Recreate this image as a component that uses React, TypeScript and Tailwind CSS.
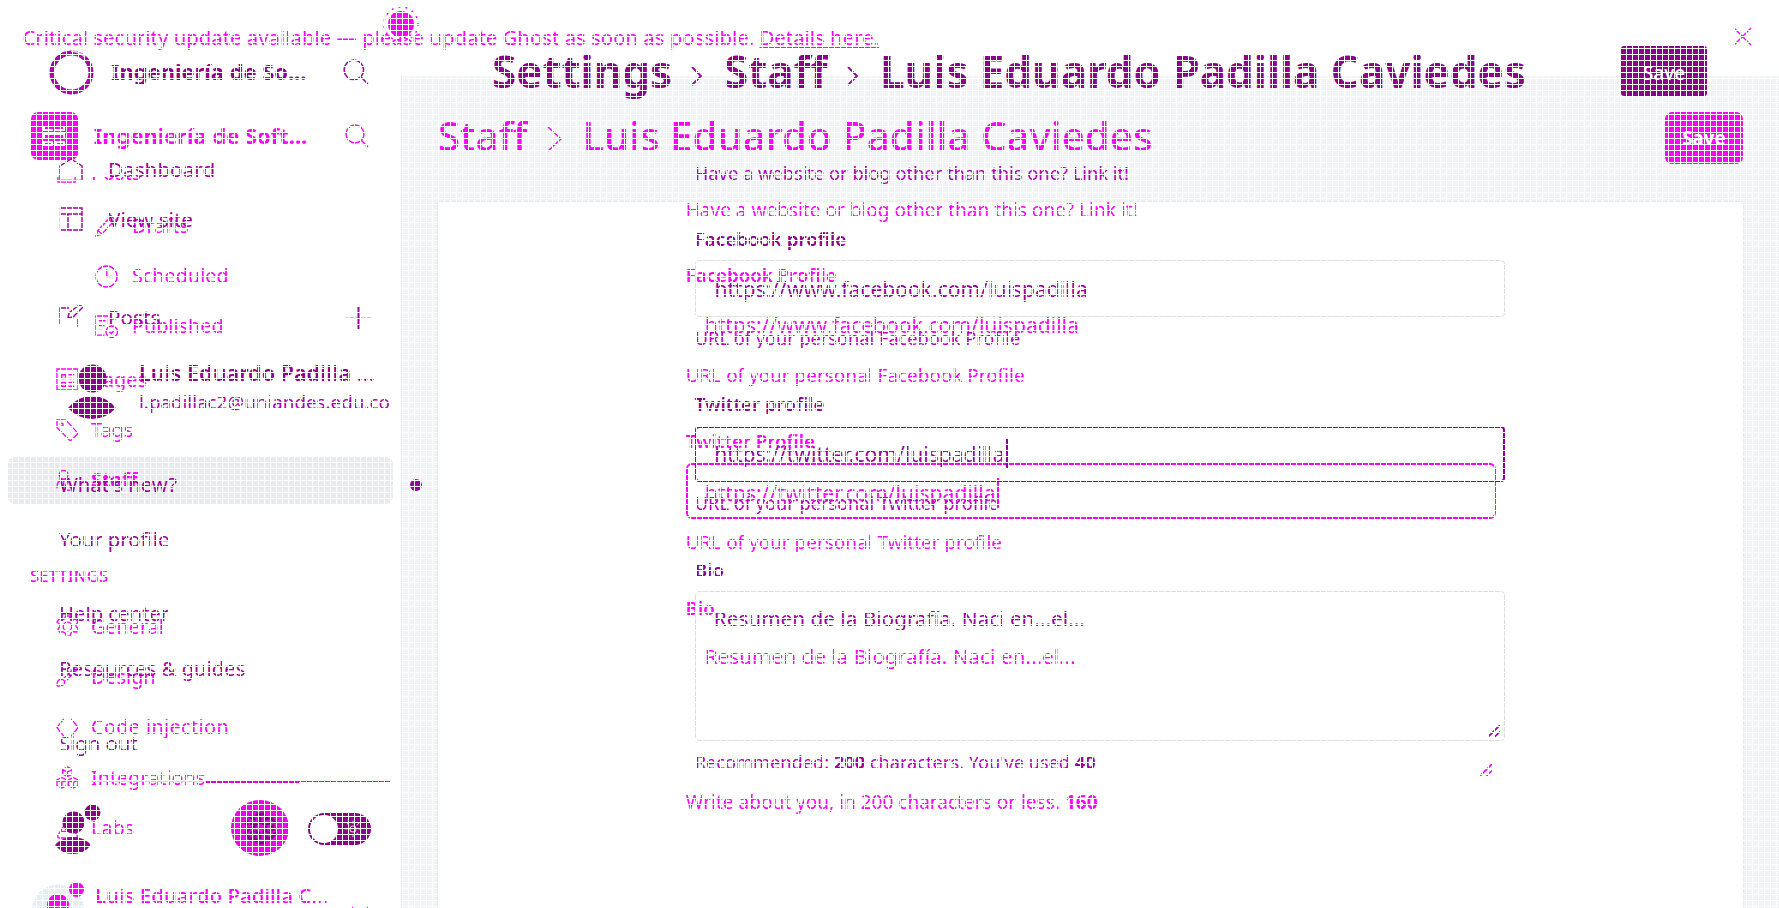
import type { ReactNode } from "react";

type Box = { children?: ReactNode; className?: string; size?: number; box?: string };

function Icon({ children, className = "", size = 23, box = "0 0 24 24" }: Box) {
  return (
    <svg
      width={size}
      height={size}
      viewBox={box}
      fill="none"
      stroke="currentColor"
      strokeWidth="1.4"
      className={"shrink-0 " + className}
    >
      {children}
    </svg>
  );
}

const Search = ({ size }: { size: number }) => (
  <Icon size={size}>
    <circle cx="10" cy="10" r="9" />
    <path d="M16.5 16.5L23 23" />
  </Icon>
);

const Cog = ({ className = "", size = 23 }: Box) => (
  <Icon size={size} className={className}>
    <circle cx="12" cy="12" r="4.5" />
    <path d="M10 1h4l1 3 3 1.2 2.700-1.200 2.300 3.500-2.200 2.500.2 2 2.200 2.500-2 3.500-3-.8-2.700 1.800-.8 3h-4l-1-3-2.700-1.600-3 .8-2-3.500 2.200-2.500V10L1 7.500 3.200 4l3 1.200L9 4z" />
  </Icon>
);

function Handle({ className = "" }: { className?: string }) {
  return (
    <svg width="12" height="12" viewBox="0 0 12 12" stroke="currentColor" strokeWidth="1.700" className={"absolute " + className}>
      <path d="M0 12L12 0M6.500 12L12 6.500" />
    </svg>
  );
}

function NavA({ icon, label, bold, wide }: { icon: ReactNode; label: string; bold?: boolean; wide?: boolean }) {
  return (
    <div className="flex h-[50.3px] items-center px-2">
      <div
        className={
          "flex h-[47px] w-[385px] items-center gap-[12px] rounded-[7px] pl-[48px] " +
          (bold ? "bg-[#e7ebf0] font-bold" : "")
        }
      >
        {icon}
        <span className={wide ? "tracking-[0.4px]" : ""}>{label}</span>
      </div>
    </div>
  );
}

function SubA({ icon, label }: { icon: ReactNode; label: string }) {
  return (
    <div className="flex h-[50.3px] items-center gap-[14px] pl-[95px]">
      {icon}
      <span>{label}</span>
    </div>
  );
}

function SidebarA() {
  return (
    <aside className="flex w-[401px] shrink-0 flex-col bg-white text-[19.8px] leading-none">
      <div className="flex h-[84px] items-center pt-[36px] pl-[31px]">
        <svg width="47" height="48" viewBox="0 0 47 48" className="shrink-0">
          <rect width="47" height="48" rx="7" fill="#ff00ff" />
          <path d="M12 14h2v3h8v2h-10zM24 17h8v-3h2v5h-10zM12 21h22v6h-2v-4h-18v4h-2zM12 29h10v5h-10zM24 29h10v5h-10z" fill="#fff" />
          <path d="M14 31h6v1.500h-6zM26 31h6v1.500h-6z" fill="#ff00ff" />
        </svg>
        <span className="ml-[15.8px] w-[251.2px] text-[21.9px] font-bold">Ingeniería de Soft...</span>
        <Search size={24} />
      </div>
      <div className="mt-[17px] h-[676px] shrink-0 overflow-hidden">
        <div className="-mt-[29.700px]">
          <NavA icon={<Icon><path d="M20 13v9H2V4h10M9 15l1-4L20 2l3 3-10 9z" /></Icon>} label="Posts" />
          <div className="py-[3px]">
            <SubA icon={<Icon><path d="M1 23l2-6L17 2l4 4L7 21zM3 17l4 4M14 5l4 4M5 15L16 4" /></Icon>} label="Drafts" />
            <SubA icon={<Icon><circle cx="12" cy="12" r="11" /><path d="M12.300 4.500v7.500h5" /></Icon>} label="Scheduled" />
            <SubA icon={<Icon><path d="M10 21H1V1h13v8M4 6h7M4 11h6M4 16h4" /><circle cx="17.500" cy="17.500" r="6" /><path d="M15 17.500l2 2 3-4" /></Icon>} label="Published" />
          </div>
          <NavA icon={<Icon><path d="M1 1h22v22H1zM6 7h4v4H6zM6 15h4v4H6zM13 7h6M13 11h6M13 15h6M13 19h6" /></Icon>} label="Pages" />
          <NavA icon={<Icon><path d="M1 2l9 0L22 15q1 1 0 2l-6 6q-1 1-2 0L1 10z" /><circle cx="6" cy="7" r="1.500" /></Icon>} label="Tags" />
          <NavA bold icon={<Icon><circle cx="8" cy="6" r="4.500" /><path d="M1 20q0-9 7-9t7 9M8 11v11M11 22h4" /></Icon>} label="Staff" />
          <div className="mt-[60.8px] h-[20px] pl-[30px] text-[16.8px] leading-[20px] font-medium">SETTINGS</div>
          <div className="mt-[15.2px]">
            <NavA icon={<Cog />} label="General" />
            <NavA icon={<Icon><path d="M1 22q0-7 4-7 4 0 4 3 0 4-8 4M8 14L20 2l3 2L10 17" /></Icon>} label="Design" />
            <NavA wide icon={<Icon><path d="M8 3L1 12l7 9M16 3l7 9-7 9" /></Icon>} label="Code injection" />
            <NavA icon={<Icon><path d="M12 1l5 2.500v5L12 11 7 8.500v-5zM6 12l5 2.500v6L6 23l-5-2.500v-6zM18 12l5 2.500v6L18 23l-5-2.500v-6zM7 4l5 2 5-2M1 15l5 2 5-2M13 15l5 2 5-2M12 6v5M6 17v6M18 17v6" /></Icon>} label="Integrations" />
            <NavA icon={<Icon><path d="M8 1h8M9 1v8L2 20q-1 3 2 3h16q3 0 2-3L15 9V1M5 16h14" /></Icon>} label="Labs" />
          </div>
        </div>
      </div>
      <div className="flex h-[55px] shrink-0 overflow-hidden pl-[32px]">
        <svg width="52" height="55" viewBox="0 0 52 55" className="shrink-0">
          <circle cx="26" cy="57.500" r="26" fill="#e5eef5" />
          <circle cx="26" cy="52" r="11" fill="#ff00ff" />
          <circle cx="44.500" cy="36.500" r="7.500" fill="#ff00ff" />
        </svg>
        <span className="mt-[32px] ml-[11px] w-[256px] text-[20.55px] leading-[20px] font-medium">Luis Eduardo Padilla C...</span>
        <svg width="18" height="12" viewBox="0 0 18 12" fill="none" stroke="currentColor" className="mt-[52.5px]">
          <path d="M0 0l9 9 9-9" />
        </svg>
      </div>
    </aside>
  );
}

function FormA() {
  return (
    <div className="h-[706px] bg-white pl-[247.7px] text-[18.7px] leading-[20px] shadow-[0_0_2px_#d5d8dc]">
      <p className="h-[15px] text-[19.05px] leading-[17px]">Have a website or blog other than this one? Link it!</p>
      <p className="mt-[47.6px] font-semibold">Facebook Profile</p>
      <div className="mt-[12.200px] flex h-[57px] w-[810px] items-center pl-[19px] text-[21.1px]">https://www.facebook.com/luispadilla</div>
      <p className="mt-[11.6px] text-[18.95px]">URL of your personal Facebook Profile</p>
      <p className="mt-[46px] font-semibold">Twitter Profile</p>
      <div className="mt-[12px] flex h-[56px] w-[810px] items-center rounded-[6px] border-2 border-[#ff00ff] pt-[3px] pl-[17px] text-[21.1px]">
        https://twitter.com/luispadilla
        <span className="ml-px h-[30px] w-[2px] bg-[#ff00ff]" />
      </div>
      <p className="mt-[12.200px] text-[18.95px]">URL of your personal Twitter profile</p>
      <p className="mt-[46.4px] font-semibold">Bio</p>
      <div className="relative mt-[12.5px] h-[149px] w-[810px] pt-[11px] pl-[19px] text-[20.75px] leading-[30px]">
        Resumen de la Biografía. Naci en...el...
        <Handle className="right-[4px] bottom-[3px]" />
      </div>
      <p className="mt-[12.500px] text-[19.05px]">Write about you, in 200 characters or less. <b>160</b></p>
    </div>
  );
}

function ScreenA() {
  return (
    <div className="flex h-[908px] flex-col text-[#ff00ff]">
      <div className="flex h-[76px] items-center justify-between bg-white pr-[27px] pb-[2px] pl-[22.5px] text-[20.37px]">
        <span>
          Critical security update available — please update Ghost as soon as possible.{" "}
          <span className="underline decoration-1 underline-offset-2">Details here.</span>
        </span>
        <Icon size={19} box="0 0 19 19" className="-mt-[2px]"><path d="M1 1l17 17M18 1L1 18" /></Icon>
      </div>
      <div className="flex min-h-0 flex-1">
        <SidebarA />
        <main className="flex-1 overflow-hidden border-l border-[#e3e5e8] bg-[#f1f3f6] pr-[36px] pl-[36px]">
          <div className="flex h-[126px] items-center text-[40.3px] leading-none font-medium">
            <span className="-mt-[5px]">Staff</span>
            <svg width="15" height="26" viewBox="0 0 15 26" fill="none" stroke="currentColor" strokeWidth="1.500" className="mr-[20.5px] ml-[19.5px]">
              <path d="M1 1l13 12L1 25" />
            </svg>
            <span className="-mt-[5px] flex-1">Luis Eduardo Padilla Caviedes</span>
            <span className="-mt-[2px] flex h-[52px] w-[78px] items-center justify-center rounded-[7px] bg-[#ff00ff] text-[18.7px] font-bold text-white">Save</span>
          </div>
          <FormA />
        </main>
      </div>
    </div>
  );
}

function NavB({ icon, label }: { icon: ReactNode; label: string }) {
  return (
    <div className="flex h-[49.5px] items-center gap-[25px] pl-[59px] text-[20.7px]">
      {icon}
      <span>{label}</span>
    </div>
  );
}

function SidebarB() {
  return (
    <aside className="w-[422px] shrink-0 pt-[50px] text-[20.25px] leading-none text-[#9d009d]">
      <div className="flex h-[44px] items-center pl-[48.5px]">
        <svg width="45" height="45" viewBox="0 0 45 45" className="shrink-0">
          <circle cx="22.500" cy="22.500" r="19.500" fill="none" stroke="#b000b0" strokeWidth="5" />
          <path d="M22 1a21 21 0 0 1 14 6" fill="none" stroke="#d0c8d0" strokeWidth="2" />
        </svg>
        <span className="ml-[17.5px] w-[232px] text-[21.9px] font-bold text-[#8c008c]">Ingeniería de So...</span>
        <Search size={26} />
      </div>
      <div className="mt-[50.8px]">
        <NavB icon={<Icon size={24}><path d="M1 22V8L12 1l11 7v14" /><path d="M1 22h22" stroke="#aaa" /></Icon>} label="Dashboard" />
        <NavB icon={<Icon size={24}><path d="M1 1v22" stroke="#ccc" /><path d="M1 1h22v22H1M1 7h22M9 7v16" /></Icon>} label="View site" />
      </div>
      <div className="mt-[48.5px] flex items-center">
        <div className="w-[346px]">
          <NavB icon={<Icon size={24}><path d="M1 20V3h9M19 13v9M9 13l1-5L20 0l4 2-10 10z" /></Icon>} label="Posts" />
        </div>
        <svg width="25" height="25" viewBox="0 0 25 25" fill="none">
          <path d="M0 13h25" stroke="#ccc" strokeWidth="2" />
          <path d="M12.500 1v23" stroke="#9d009d" strokeWidth="2" />
        </svg>
      </div>
      <div className="mt-[17.400px] flex h-[60.5px] pl-[68px]">
        <svg width="48" height="56" viewBox="0 0 48 56" fill="#8c008c" className="mt-[5px] shrink-0">
          <circle cx="24.500" cy="14.500" r="14" />
          <path d="M0 44Q10 32 24 32T48 44Q38 55 24 55T0 44z" />
        </svg>
        <div className="ml-[23px] whitespace-nowrap">
          <div className="text-[21.65px] leading-[28px] font-semibold text-[#8c008c]">Luis Eduardo Padilla ...</div>
          <div className="mt-[0.8px] text-[18.8px] leading-[28px] text-[#ac00ac]">l.padillac2@uniandes.edu.co</div>
        </div>
      </div>
      <div className="pl-[59px] leading-[55px]">
        <div className="mt-[37.500px] flex items-center justify-between">
          What's new?
          <span className="size-[12px] rounded-full bg-[#9600a0]" />
        </div>
        <div>Your profile</div>
        <div className="mt-[19px]">Help center</div>
        <div>Resources &amp; guides</div>
        <div className="mt-[19.5px]">Sign out</div>
      </div>
      <div className="mt-[10px] ml-[90px] flex h-[2px] w-[301px] items-start">
        <span className="h-px w-[116px] bg-[#e3c9e3]" />
        <span className="h-[2px] w-[93px] bg-[#dc00dc]" />
        <span className="h-px flex-1 bg-[#dc00dc]" />
      </div>
      <div className="mt-[16px] flex items-start pl-[55px]">
        <svg width="47" height="56" viewBox="0 0 47 56" fill="#8c008c" className="shrink-0">
          <circle cx="18.500" cy="23.500" r="11" />
          <circle cx="37.500" cy="13.500" r="8" />
          <path d="M0 46Q7 38 18 38T36 46Q29 55 18 55T0 46z" />
        </svg>
        <svg width="58" height="56" viewBox="0 0 58 56" fill="none" stroke="#82008a" className="mt-px ml-[129px] shrink-0">
          <ellipse cx="29" cy="28" rx="29" ry="28" fill="#ee00ee" stroke="none" />
          <path
            d="M26 14h7l2 5 5-2 4 6-3 5 3 5-4 6-5-2-2 6h-7l-2-6-5 2-4-6 3-5-3-5 4-6 5 2z"
            strokeWidth="3"
            strokeDasharray="7 2"
          />
          <circle cx="29" cy="28" r="5.500" strokeWidth="3" strokeDasharray="6 2" />
          <path d="M29 17v5M29 34v5M19 23l4 2M39 23l-4 2M19 33l4-2M39 33l-4-2" strokeWidth="2.500" />
        </svg>
        <span className="mt-[14px] ml-[19px] flex h-[32px] w-[63px] items-center rounded-full bg-[#8c008c] pl-[2px]">
          <span className="size-[28px] shrink-0 rounded-full bg-white" />
          <Icon size={18} className="ml-[6px] text-[#e8c4e8]">
            <circle cx="12" cy="12" r="4" />
            <path d="M12 1v4M12 19v4M1 12h4M19 12h4M4 4l3 3M17 17l3 3M4 20l3-3M17 7l3-3" />
          </Icon>
        </span>
      </div>
    </aside>
  );
}

function FormB() {
  return (
    <div className="pl-[272.8px] text-[18.7px] leading-[20px] text-[#8c008c]">
      <p className="text-[18.3px] text-[#b000b4]">Have a website or blog other than this one? Link it!</p>
      <p className="mt-[45.5px] font-semibold">Facebook profile</p>
      <div className="mt-[11px] flex h-[57px] w-[810px] items-center rounded-[4px] border border-[#dedede] pt-[2px] pl-[18.600px] text-[21.05px] text-[#9a00a0]">https://www.facebook.com/luispadilla</div>
      <p className="mt-[11px] text-[18.2px] text-[#b400b8]">URL of your personal Facebook Profile</p>
      <p className="mt-[46.6px] font-semibold">Twitter profile</p>
      <div className="mt-[11.9px] flex h-[56px] w-[810px] items-center rounded-[4px] border-2 border-[#8f009a] pl-[17.500px] text-[21.05px] text-[#9a00a0]">
        https://twitter.com/luispadilla
        <span className="ml-px h-[29px] w-[2px] bg-[#8f009a]" />
      </div>
      <p className="mt-[10.6px] text-[18.2px] text-[#b400b8]">URL of your personal Twitter profile</p>
      <p className="mt-[47.6px] font-semibold">Bio</p>
      <div className="relative mt-[11px] h-[150px] w-[810px] rounded-[4px] border border-[#dedede] pt-[11px] pl-[18px] text-[20.75px] leading-[30px] text-[#9a00a0]">
        Resumen de la Biografía. Naci en...el...
        <Handle className="right-[4px] bottom-[3px]" />
      </div>
      <p className="mt-[10.800px] text-[18.2px] text-[#b400b8]">
        Recommended: <b className="text-[#9a00a0]">200</b> characters. You've used <b className="text-[#9a00a0]">40</b>
      </p>
    </div>
  );
}

const Crumb = ({ className }: { className: string }) => (
  <svg width="11" height="20" viewBox="0 0 11 20" fill="none" stroke="#9600a0" strokeWidth="1.800" className={"mt-[9px] shrink-0 " + className}>
    <path d="M1 1l9 9-9 9" />
  </svg>
);

function ScreenB() {
  return (
    <div className="absolute inset-0 flex overflow-hidden">
      <SidebarB />
      <main className="flex-1">
        <div className="flex h-[163px] items-start pr-[72px] pl-[70px] text-[43.95px] font-bold text-[#8c008c]">
          <div className="mt-[42px] flex h-[58px] flex-1 items-center leading-[58px]">
            <span className="w-[177px]">Settings</span>
            <Crumb className="mx-[22px]" />
            <span className="w-[105px]">Staff</span>
            <Crumb className="mr-[22px] ml-[18px]" />
            <span className="w-[741px] whitespace-nowrap">Luis Eduardo Padilla Caviedes</span>
          </div>
          <span className="mt-[46px] flex h-[50px] w-[86px] items-center justify-center rounded-[3px] bg-[#8c008c] pt-[4px] text-[19px] leading-none font-medium text-white">Save</span>
        </div>
        <FormB />
      </main>
    </div>
  );
}

export default function App() {
  return (
    <div className="relative h-[908px] w-full overflow-hidden bg-white font-['Noto_Sans',sans-serif] whitespace-nowrap">
      <ScreenA />
      <ScreenB />
      <svg width="38" height="38" viewBox="0 0 38 38" className="absolute top-[5px] left-[381.5px]">
        <circle cx="19" cy="19" r="17" fill="none" stroke="#ff00ff" strokeWidth="1.500" strokeDasharray="2 5" />
        <circle cx="19" cy="19" r="13" fill="#ff00ff" />
      </svg>
      <div className="absolute inset-0 bg-[linear-gradient(to_right,#fff_1px,transparent_1px),linear-gradient(to_bottom,#fff_1px,transparent_1px)] bg-[size:6px_6px]" />
    </div>
  );
}
